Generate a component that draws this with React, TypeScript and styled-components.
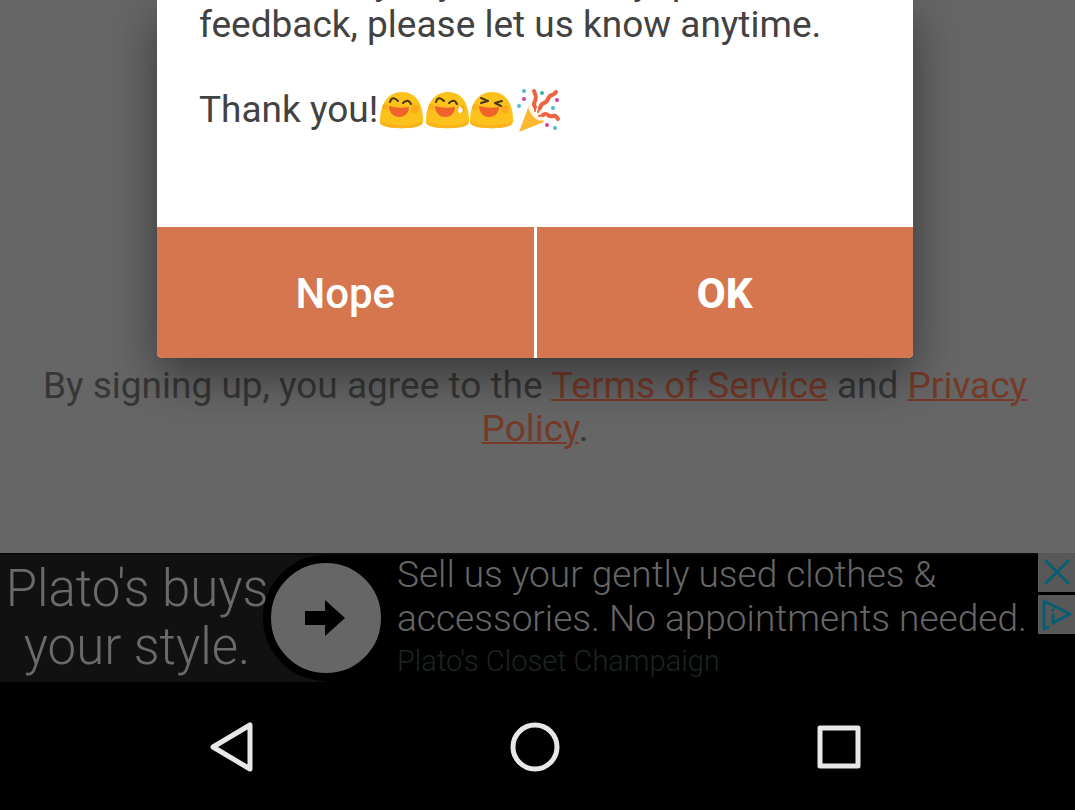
import React from "react";
import styled, { createGlobalStyle } from "styled-components";

const GlobalStyle = createGlobalStyle`
  * { box-sizing: border-box; }
  body {
    margin: 0;
    background: #000;
    font-family: Roboto, "Liberation Sans", sans-serif;
  }
`;

const Screen = styled.div`
  min-height: 100vh;
  display: flex;
  flex-direction: column;
`;

const Page = styled.main`
  background: #666;
  padding: 0 45px 103px 40px;
`;

const Dialog = styled.section`
  margin: 0 117px;
  position: relative;
  background: #fff;
  border-radius: 0 0 5px 5px;
  box-shadow: 0 18px 48px rgba(0, 0, 0, 0.45);
`;

const Message = styled.div`
  height: 227px;
  overflow: hidden;
  display: flex;
  flex-direction: column;
  justify-content: flex-end;
  gap: 42px;
  padding: 0 42px 96px;
  color: #424242;
  font-size: 37px;
  line-height: 43px;
`;

const Paragraph = styled.p`
  margin: 0;
  white-space: nowrap;
`;

const EmojiArt = styled.svg`
  width: 45px;
  height: 46px;
  margin: -6px 0;
  vertical-align: -5px;
  overflow: visible;
`;

const Actions = styled.div`
  display: grid;
  grid-template-columns: 1fr 1fr;
  gap: 3px;
`;

const Action = styled.button<{ $strong?: boolean }>`
  height: 131px;
  border: 0;
  padding: 2px 0 0;
  background: #d5764f;
  color: #fff;
  font-family: inherit;
  font-size: 42px;
  font-weight: ${(p) => (p.$strong ? 800 : 500)};
  &:first-child { border-bottom-left-radius: 5px; }
  &:last-child { border-bottom-right-radius: 5px; }
`;

const Terms = styled.p`
  margin: 6px 0 0;
  text-align: center;
  color: #363636;
  font-size: 37px;
  line-height: 43px;
`;

const TermsLink = styled.a`
  color: #753a28;
  text-decoration: underline;
  text-decoration-thickness: 2px;
`;

const Ad = styled.aside`
  height: 129px;
  display: flex;
  border-top: 2px solid #0a0a0a;
  background: #000;
`;

const Slogan = styled.div`
  width: 325px;
  flex: none;
  padding: 5px 51px 0 0;
  background: #111;
  color: #6a6a6a;
  font-size: 51px;
  font-weight: 300;
  line-height: 58px;
  text-align: center;
  white-space: nowrap;
`;

const GoButton = styled.button`
  width: 126px;
  height: 126px;
  flex: none;
  margin-left: -62px;
  padding: 0;
  border: 8px solid #000;
  border-radius: 50%;
  background: #666;
  display: grid;
  place-items: center;
`;

const AdCopy = styled.div`
  flex: 1;
  min-width: 0;
  margin-top: -2px;
  padding-left: 8px;
  color: #666;
  font-size: 37px;
  font-weight: 300;
  line-height: 44px;
  white-space: nowrap;
`;

const Advertiser = styled.div`
  color: #1c251f;
  font-size: 29px;
  line-height: 40px;
`;

const AdControls = styled.div`
  width: 37px;
  flex: none;
  margin-top: -2px;
  display: flex;
  flex-direction: column;
  gap: 3px;
`;

const AdControl = styled.button`
  width: 37px;
  height: 39px;
  padding: 0;
  border: 0;
  background: #585858;
  display: grid;
  place-items: center;
  svg { fill: none; stroke: #075e73; stroke-width: 3; stroke-linecap: round; stroke-linejoin: round; }
`;

const NavBar = styled.nav`
  flex: 1;
  min-height: 128px;
  display: flex;
  justify-content: space-around;
  align-items: center;
  padding: 2px 84px 0 80px;
`;

const NavButton = styled.button`
  width: 56px;
  height: 56px;
  padding: 0;
  border: 0;
  background: none;
  svg { display: block; fill: none; stroke: #e8e8e8; stroke-width: 5; stroke-linejoin: round; }
`;

function Blob({ label, x, children }: { label: string; x: number; children: React.ReactNode }) {
  return (
    <EmojiArt viewBox="0 0 45 46" role="img" aria-label={label}>
      <g transform={`translate(${x} 0)`}>
        <path d="M1 34C1 17 9 5 23 5s21 12 21 28c0 3-1 5-4 6-9 3-26 3-35 0-3-1-4-2-4-5Z" fill="#fcc21b" />
        <path d="M1 33c0 3 1 5 4 6 9 3 26 3 35 0 3-1 4-3 4-6-3 3-8 5-21 5S4 36 1 33Z" fill="#fab31c" />
        <circle cx="6" cy="20" r="3" fill="#f7931e" opacity="0.4" />
        <circle cx="36" cy="22" r="4" fill="#f7931e" opacity="0.5" />
        <path d="M10 19q10 3 20 1c0 6-4 10-10 10s-10-5-10-11Z" fill="#f0642b" />
        <g fill="none" stroke="#4a3413" strokeWidth="2" strokeLinecap="round" strokeLinejoin="round">
          {children}
        </g>
      </g>
    </EmojiArt>
  );
}

const smilingEyes = <path d="M11 15q2-7 8-1M24 16q5-5 8 1" />;

function PartyPopper() {
  return (
    <EmojiArt viewBox="0 0 45 46" role="img" aria-label="party popper">
      <path d="M6 45 16 18q9 4 15 17Z" fill="#fbb830" />
      <path d="M16 18c4-3 9 0 12 4s5 9 2 11-8-1-11-5-5-8-3-10Z" fill="#fff5e8" />
      <g fill="none" stroke="#ee6340" strokeWidth="4" strokeLinecap="round" strokeLinejoin="round">
        <path d="M22 20q-2-3 0-6t-1-10" />
        <path d="M27 21q1-4 4-5t4-4 4-4 4-3" />
        <path d="M30 28q3-2 5 0t5 1 5 3" />
        <path d="M22 20v4M27 21l-2 4M30 28l-4 1" strokeWidth="2" />
      </g>
      <g fill="#4fb8d8">
        <circle cx="11" cy="4" r="2" />
        <circle cx="6" cy="19" r="2" />
        <circle cx="40" cy="21" r="2" />
        <circle cx="42" cy="41" r="2" />
      </g>
      <g fill="#d6409a">
        <circle cx="11" cy="12" r="2" />
        <circle cx="44" cy="13" r="2" />
        <circle cx="34" cy="38" r="2" />
      </g>
      <circle cx="29" cy="6" r="2" fill="#2fb5a0" />
    </EmojiArt>
  );
}

export default function App() {
  return (
    <Screen>
      <GlobalStyle />
      <Page>
        <Dialog role="dialog" aria-label="Feedback">
          <Message>
            <Paragraph>
              Additionally, if you have any questions or
              <br />
              feedback, please let us know anytime.
            </Paragraph>
            <Paragraph>
              Thank you!
              <Blob label="smiling face" x={1}>{smilingEyes}</Blob>
              <Blob label="smiling face with sweat" x={2}>
                {smilingEyes}
                <path d="M35 20c3 2 3 5 0 6-2-1-2-4 0-6Z" fill="#fff" stroke="#fff" strokeWidth="1" />
              </Blob>
              <Blob label="laughing face" x={1}>
                <path d="m12 11 7 3-7 2M33 14l-7 2 6 3" />
              </Blob>
              <PartyPopper />
            </Paragraph>
          </Message>
          <Actions>
            <Action type="button">Nope</Action>
            <Action type="button" $strong>OK</Action>
          </Actions>
        </Dialog>
        <Terms>
          By signing up, you agree to the <TermsLink href="#terms">Terms of Service</TermsLink> and{" "}
          <TermsLink href="#privacy">Privacy Policy</TermsLink>.
        </Terms>
      </Page>
      <Ad>
        <Slogan>
          Plato's buys
          <br />
          your style.
        </Slogan>
        <GoButton type="button" aria-label="Visit advertiser">
          <svg width="42" height="36" viewBox="0 0 42 36" fill="#000">
            <path d="M0 11h20V0l20 18-20 18V25H0Z" />
          </svg>
        </GoButton>
        <AdCopy>
          Sell us your gently used clothes &amp;
          <br />
          accessories. No appointments needed.
          <Advertiser>Plato's Closet Champaign</Advertiser>
        </AdCopy>
        <AdControls>
          <AdControl type="button" aria-label="Close ad">
            <svg width="37" height="39" viewBox="0 0 37 39">
              <path d="M8 8 30 30M30 8 8 30" />
            </svg>
          </AdControl>
          <AdControl type="button" aria-label="About this ad">
            <svg width="37" height="39" viewBox="0 0 37 39">
              <path d="M10 32 6 34V6L32 19 15 28V20" />
              <path d="M15 15v0" />
            </svg>
          </AdControl>
        </AdControls>
      </Ad>
      <NavBar aria-label="System">
        <NavButton type="button" aria-label="Back">
          <svg width="56" height="56" viewBox="0 0 56 56">
            <path d="M46 6v44L9 28Z" />
          </svg>
        </NavButton>
        <NavButton type="button" aria-label="Home">
          <svg width="56" height="56" viewBox="0 0 56 56">
            <circle cx="28" cy="28" r="22" />
          </svg>
        </NavButton>
        <NavButton type="button" aria-label="Recent apps">
          <svg width="56" height="56" viewBox="0 0 56 56">
            <rect x="9" y="9" width="38" height="38" />
          </svg>
        </NavButton>
      </NavBar>
    </Screen>
  );
}
